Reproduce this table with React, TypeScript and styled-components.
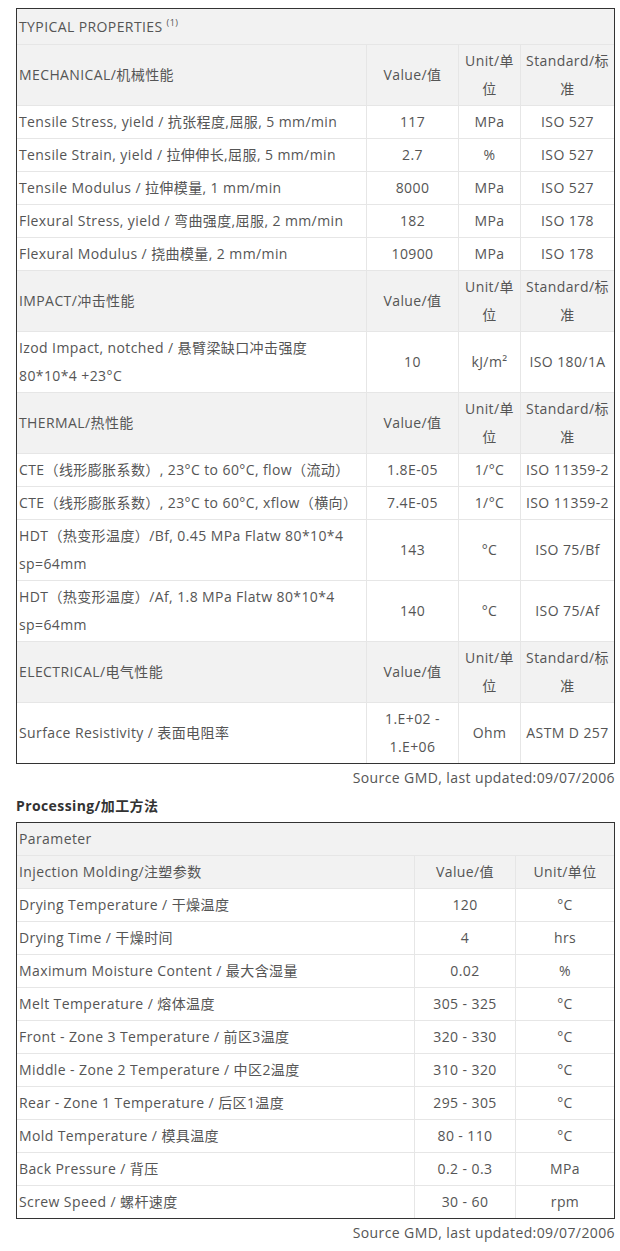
import React from 'react'
import styled, { createGlobalStyle } from 'styled-components'

const GlobalStyle = createGlobalStyle`
	body {
		margin: 0;
		background: #fff;
		font-family: "Open Sans", "Noto Sans CJK SC", sans-serif;
		font-size: 14px;
		letter-spacing: 0.4px;
		color: #555;
	}
`

interface IRow {
	name: string
	value: string
	unit: string
	standard?: string
}

interface ISection {
	title: string
	rows: IRow[]
}

const propertySections: ISection[] = [
	{
		title: 'MECHANICAL/机械性能',
		rows: [
			{ name: 'Tensile Stress, yield / 抗张程度,屈服, 5 mm/min', value: '117', unit: 'MPa', standard: 'ISO 527' },
			{ name: 'Tensile Strain, yield / 拉伸伸长,屈服, 5 mm/min', value: '2.7', unit: '%', standard: 'ISO 527' },
			{ name: 'Tensile Modulus / 拉伸模量, 1 mm/min', value: '8000', unit: 'MPa', standard: 'ISO 527' },
			{ name: 'Flexural Stress, yield / 弯曲强度,屈服, 2 mm/min', value: '182', unit: 'MPa', standard: 'ISO 178' },
			{ name: 'Flexural Modulus / 挠曲模量, 2 mm/min', value: '10900', unit: 'MPa', standard: 'ISO 178' },
		],
	},
	{
		title: 'IMPACT/冲击性能',
		rows: [
			{ name: 'Izod Impact, notched / 悬臂梁缺口冲击强度 80*10*4 +23°C', value: '10', unit: 'kJ/m²', standard: 'ISO 180/1A' },
		],
	},
	{
		title: 'THERMAL/热性能',
		rows: [
			{ name: 'CTE（线形膨胀系数）, 23°C to 60°C, flow（流动）', value: '1.8E-05', unit: '1/°C', standard: 'ISO 11359-2' },
			{ name: 'CTE（线形膨胀系数）, 23°C to 60°C, xflow（横向）', value: '7.4E-05', unit: '1/°C', standard: 'ISO 11359-2' },
			{ name: 'HDT（热变形温度）/Bf, 0.45 MPa Flatw 80*10*4 sp=64mm', value: '143', unit: '°C', standard: 'ISO 75/Bf' },
			{ name: 'HDT（热变形温度）/Af, 1.8 MPa Flatw 80*10*4 sp=64mm', value: '140', unit: '°C', standard: 'ISO 75/Af' },
		],
	},
	{
		title: 'ELECTRICAL/电气性能',
		rows: [
			{ name: 'Surface Resistivity / 表面电阻率', value: '1.E+02 - 1.E+06', unit: 'Ohm', standard: 'ASTM D 257' },
		],
	},
]

const processingRows: IRow[] = [
	{ name: 'Drying Temperature / 干燥温度', value: '120', unit: '°C' },
	{ name: 'Drying Time / 干燥时间', value: '4', unit: 'hrs' },
	{ name: 'Maximum Moisture Content / 最大含湿量', value: '0.02', unit: '%' },
	{ name: 'Melt Temperature / 熔体温度', value: '305 - 325', unit: '°C' },
	{ name: 'Front - Zone 3 Temperature / 前区3温度', value: '320 - 330', unit: '°C' },
	{ name: 'Middle - Zone 2 Temperature / 中区2温度', value: '310 - 320', unit: '°C' },
	{ name: 'Rear - Zone 1 Temperature / 后区1温度', value: '295 - 305', unit: '°C' },
	{ name: 'Mold Temperature / 模具温度', value: '80 - 110', unit: '°C' },
	{ name: 'Back Pressure / 背压', value: '0.2 - 0.3', unit: 'MPa' },
	{ name: 'Screw Speed / 螺杆速度', value: '30 - 60', unit: 'rpm' },
]

export default function App() {
	return (
		<StyledPage>
			<GlobalStyle />
			<StyledHeading $clipped>Property/物性</StyledHeading>
			<StyledTable>
				<colgroup>
					<col style={{ width: 350 }} />
					<col style={{ width: 92 }} />
					<col style={{ width: 62 }} />
					<col style={{ width: 93 }} />
				</colgroup>
				<tbody>
					<StyledRow $shaded>
						<StyledCell colSpan={4} $tall>TYPICAL PROPERTIES <StyledSup>(1)</StyledSup></StyledCell>
					</StyledRow>
					{propertySections.map(section => (
						<React.Fragment key={section.title}>
							<StyledRow $shaded>
								<StyledCell>{section.title}</StyledCell>
								<StyledCell $center>Value/值</StyledCell>
								<StyledCell $center>Unit/单位</StyledCell>
								<StyledCell $center>Standard/标准</StyledCell>
							</StyledRow>
							{section.rows.map(row => (
								<StyledRow key={row.name}>
									<StyledCell>{row.name}</StyledCell>
									<StyledCell $center>{row.value}</StyledCell>
									<StyledCell $center>{row.unit}</StyledCell>
									<StyledCell $center>{row.standard}</StyledCell>
								</StyledRow>
							))}
						</React.Fragment>
					))}
				</tbody>
			</StyledTable>
			<StyledSource>Source GMD, last updated:09/07/2006</StyledSource>

			<StyledHeading>Processing/加工方法</StyledHeading>
			<StyledTable>
				<colgroup>
					<col style={{ width: 398 }} />
					<col style={{ width: 101 }} />
					<col style={{ width: 98 }} />
				</colgroup>
				<tbody>
					<StyledRow $shaded>
						<StyledCell colSpan={3}>Parameter</StyledCell>
					</StyledRow>
					<StyledRow $shaded>
						<StyledCell>Injection Molding/注塑参数</StyledCell>
						<StyledCell $center>Value/值</StyledCell>
						<StyledCell $center>Unit/单位</StyledCell>
					</StyledRow>
					{processingRows.map(row => (
						<StyledRow key={row.name}>
							<StyledCell>{row.name}</StyledCell>
							<StyledCell $center>{row.value}</StyledCell>
							<StyledCell $center>{row.unit}</StyledCell>
						</StyledRow>
					))}
				</tbody>
			</StyledTable>
			<StyledSource>Source GMD, last updated:09/07/2006</StyledSource>
		</StyledPage>
	)
}

const StyledPage = styled.div`
	width: 599px;
	margin-left: 16px;
	padding-bottom: 10px;
`

const StyledHeading = styled.h3<{ $clipped?: boolean }>`
	margin: ${props => props.$clipped ? '-18px 0 0' : '4px 0 0'};
	padding: 0 0 6px;
	font-size: 14px;
	font-weight: 700;
	line-height: 20px;
	color: #333;
`

const StyledTable = styled.table`
	width: 599px;
	box-sizing: border-box;
	table-layout: fixed;
	border-collapse: separate;
	border-spacing: 0;
	border: 1px solid #333;
`

const StyledRow = styled.tr<{ $shaded?: boolean }>`
	background: ${props => props.$shaded ? '#f2f2f2' : '#fff'};

	&:last-child > td {
		border-bottom: none;
	}
`

const StyledCell = styled.td<{ $center?: boolean; $tall?: boolean }>`
	padding: ${props => props.$tall ? '4px 2px 3px' : '2px 2px'};
	border-right: 1px solid #e6e6e6;
	border-bottom: 1px solid #e6e6e6;
	line-height: 28px;
	text-align: ${props => props.$center ? 'center' : 'left'};
	vertical-align: middle;
	color: #555;

	&:last-child {
		border-right: none;
	}
`

const StyledSup = styled.sup`
	font-size: 9px;
	line-height: 0;
`

const StyledSource = styled.div`
	text-align: right;
	line-height: 28px;
	color: #555;
`
